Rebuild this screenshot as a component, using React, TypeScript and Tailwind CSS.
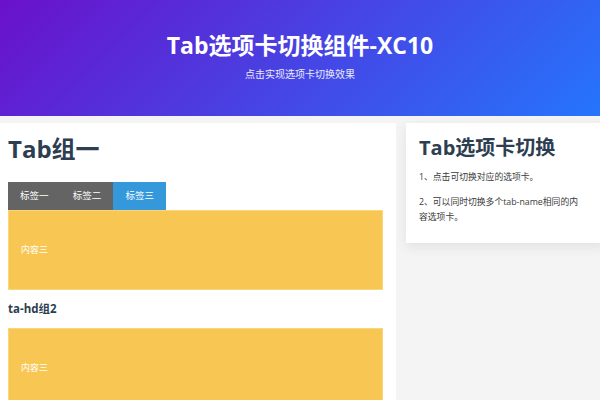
import React from "react";

const font = { fontFamily: '"Open Sans", "Noto Sans CJK SC", sans-serif' };

function TabBox({ text }: { text: string }) {
  return (
    <div className="h-[80px] w-[375px] bg-[#f8c753] border border-[#fbd57c] flex items-center pl-[12px] text-[9px] text-white">
      {text}
    </div>
  );
}

export default function App() {
  const tabs = ["标签一", "标签二", "标签三"];
  return (
    <div className="w-[600px] h-[400px] overflow-hidden bg-[#f4f4f4]" style={font}>
      <header className="h-[116px] bg-[linear-gradient(135deg,#6a11cb_0%,#2575fc_100%)] flex flex-col items-center text-white">
        <h1 className="mt-[28px] text-[23px] leading-[34px] font-bold">Tab选项卡切换组件-XC10</h1>
        <p className="mt-[5px] text-[10px] leading-[14px] text-white/90">点击实现选项卡切换效果</p>
      </header>
      <main className="flex gap-[10px] pt-[7px]">
        <section className="w-[396px] shrink-0 h-[300px] bg-white pl-[8px] pt-[8px]">
          <h2 className="text-[24px] leading-[36px] font-bold text-[#2c3e50]">Tab组一</h2>
          <div className="mt-[15px] flex">
            {tabs.map((t, i) => (
              <div
                key={t}
                className={
                  "w-[52.7px] h-[28px] flex items-center justify-center text-[9.5px] text-white " +
                  (i === 2 ? "bg-[#3498db]" : "bg-[#646464]")
                }
              >
                {t}
              </div>
            ))}
          </div>
          <TabBox text="内容三" />
          <h3 className="mt-[10px] text-[11.5px] leading-[18px] font-bold text-[#2c3e50]">ta-hd组2</h3>
          <div className="mt-[10px]">
            <TabBox text="内容三" />
          </div>
        </section>
        <aside className="w-[200px] shrink-0 self-start h-[120px] bg-white shadow-[0_4px_12px_rgba(0,0,0,0.08)] pl-[13px] pr-[24px] pt-[10px]">
          <h2 className="text-[20px] leading-[30px] font-bold text-[#2c3e50]">Tab选项卡切换</h2>
          <p className="mt-[7px] text-[8.8px] leading-[15px] text-[#3a3a3a]">1、点击可切换对应的选项卡。</p>
          <p className="mt-[10px] text-[8.8px] leading-[15px] text-[#3a3a3a]">2、可以同时切换多个tab-name相同的内容选项卡。</p>
        </aside>
      </main>
    </div>
  );
}
